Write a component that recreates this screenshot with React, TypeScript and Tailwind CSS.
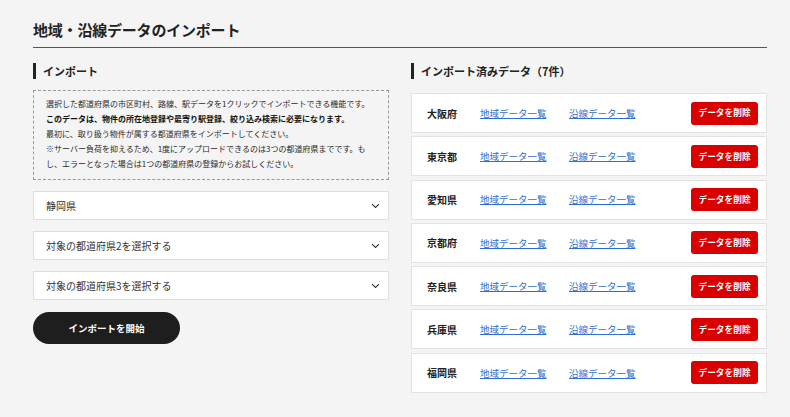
import React from 'react';

const font = { fontFamily: '"Noto Sans CJK JP", "Noto Sans", sans-serif' };

const prefectures = ['大阪府', '東京都', '愛知県', '京都府', '奈良県', '兵庫県', '福岡県'];

const Chevron: React.FC = () => (
  <svg width="9" height="6" viewBox="0 0 9 6" fill="none" className="shrink-0">
    <path d="M1 1.2l3.5 3.3L8 1.2" stroke="#333" strokeWidth="1.1" />
  </svg>
);

const SectionHeading: React.FC<{ children: React.ReactNode }> = ({ children }) => (
  <div className="flex items-center h-4 gap-[7px]">
    <span className="w-[3px] h-4 bg-[#222]" />
    <h2 className="text-[11px] font-bold text-[#222] leading-none">{children}</h2>
  </div>
);

const SelectBox: React.FC<{ label: string }> = ({ label }) => (
  <div className="h-[29px] bg-white border border-[#dedede] flex items-center justify-between pl-[12px] pr-[8px]">
    <span className="text-[10px] text-[#333]">{label}</span>
    <Chevron />
  </div>
);

export default function App() {
  return (
    <div className="min-h-[417px] w-[790px] bg-[#f4f4f4] text-[#222]" style={font}>
      <div className="pl-[33px] w-[767px]">
        <div className="h-[48px] flex items-end pb-[10px] border-b border-[#555]">
          <h1 className="text-[15px] font-bold leading-none tracking-[-0.2px]">地域・沿線データのインポート</h1>
        </div>

        <div className="flex gap-[22px] pt-[15px]">
          {/* left */}
          <div className="w-[356px]">
            <SectionHeading>インポート</SectionHeading>
            <div className="mt-[11px] h-[90px] border border-dashed border-[#999] px-[12px] pt-[5px] text-[8px] leading-[15px] text-[#2a2a2a]">
              <p>選択した都道府県の市区町村、路線、駅データを1クリックでインポートできる機能です。</p>
              <p className="font-bold text-[#111]">このデータは、物件の所在地登録や最寄り駅登録、絞り込み検索に必要になります。</p>
              <p>最初に、取り扱う物件が属する都道府県をインポートしてください。</p>
              <p>
                ※サーバー負荷を抑えるため、1度にアップロードできるのは3つの都道府県までです。も
                <br />
                し、エラーとなった場合は1つの都道府県の登録からお試しください。
              </p>
            </div>
            <div className="mt-[11px] flex flex-col gap-[11px]">
              <SelectBox label="静岡県" />
              <SelectBox label="対象の都道府県2を選択する" />
              <SelectBox label="対象の都道府県3を選択する" />
            </div>
            <button className="mt-[12px] w-[147px] h-[32px] rounded-full bg-[#1e1e1e] text-white text-[9.5px] font-bold">
              インポートを開始
            </button>
          </div>

          {/* right */}
          <div className="w-[356px]">
            <SectionHeading>インポート済みデータ（7件）</SectionHeading>
            <div className="mt-[14px] flex flex-col gap-[3.3px]">
              {prefectures.map((p) => (
                <div key={p} className="h-[40px] bg-white border border-[#e2e2e2] flex items-center pl-[15px] pr-[8px]">
                  <span className="w-[53px] text-[10px] font-bold text-[#222]">{p}</span>
                  <a href="#" className="text-[9.5px] text-[#2d6fd2] underline w-[89px]">地域データ一覧</a>
                  <a href="#" className="text-[9.5px] text-[#2d6fd2] underline">沿線データ一覧</a>
                  <button className="ml-auto w-[67px] h-[23px] rounded-[3px] bg-[#d90000] text-white text-[8.7px] font-bold">
                    データを削除
                  </button>
                </div>
              ))}
            </div>
          </div>
        </div>
      </div>
    </div>
  );
}
